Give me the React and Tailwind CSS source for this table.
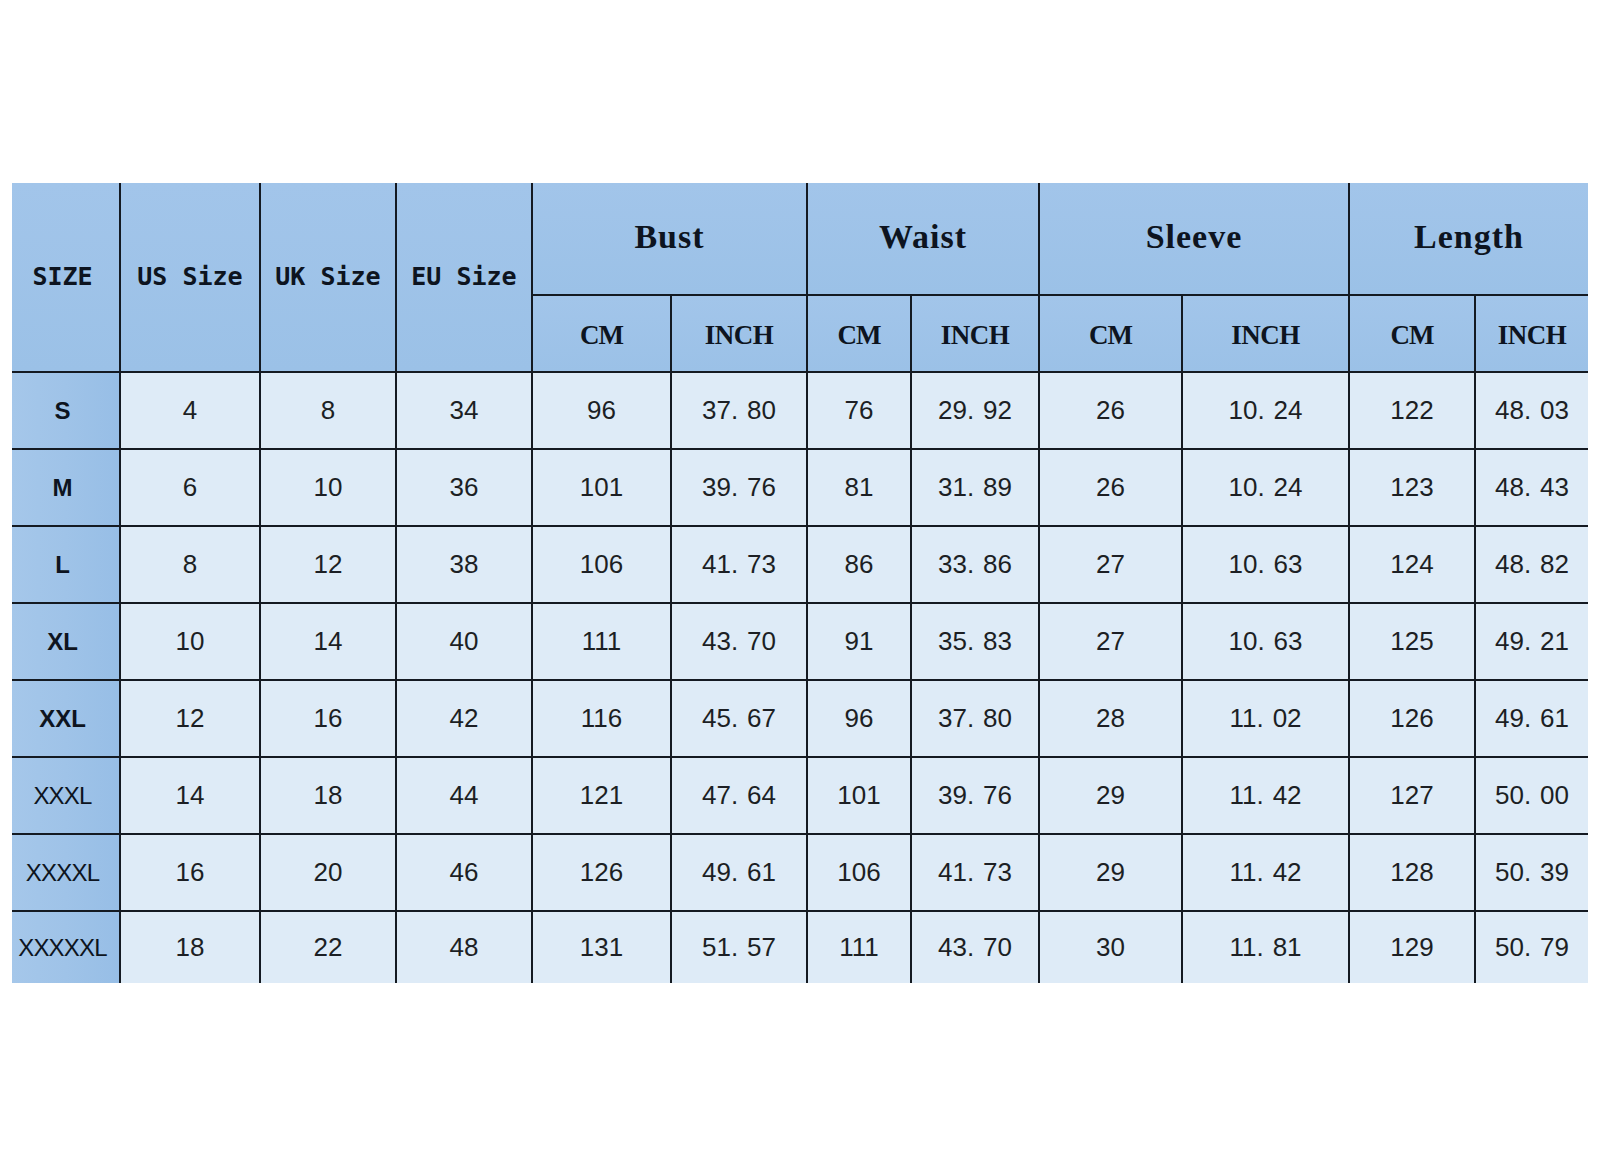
import React from 'react';

const groups = ['Bust', 'Waist', 'Sleeve', 'Length'];

const rows = [
  { size: 'S', bold: true, v: ['4', '8', '34', '96', '37.80', '76', '29.92', '26', '10.24', '122', '48.03'] },
  { size: 'M', bold: true, v: ['6', '10', '36', '101', '39.76', '81', '31.89', '26', '10.24', '123', '48.43'] },
  { size: 'L', bold: true, v: ['8', '12', '38', '106', '41.73', '86', '33.86', '27', '10.63', '124', '48.82'] },
  { size: 'XL', bold: true, v: ['10', '14', '40', '111', '43.70', '91', '35.83', '27', '10.63', '125', '49.21'] },
  { size: 'XXL', bold: true, v: ['12', '16', '42', '116', '45.67', '96', '37.80', '28', '11.02', '126', '49.61'] },
  { size: 'XXXL', bold: false, v: ['14', '18', '44', '121', '47.64', '101', '39.76', '29', '11.42', '127', '50.00'] },
  { size: 'XXXXL', bold: false, v: ['16', '20', '46', '126', '49.61', '106', '41.73', '29', '11.42', '128', '50.39'] },
  { size: 'XXXXXL', bold: false, v: ['18', '22', '48', '131', '51.57', '111', '43.70', '30', '11.81', '129', '50.79'] },
];

// "37.80" is drawn with a wide gap after the point, as in the chart
const Num = ({ value }) => {
  const i = value.indexOf('.');
  if (i < 0) return <span>{value}</span>;
  return (
    <span>
      {value.slice(0, i)}
      <span className="mr-[9px]">.</span>
      {value.slice(i + 1)}
    </span>
  );
};

const headCell = 'flex items-center justify-center bg-gradient-to-b from-[#a2c5ea] to-[#9bc1e7] text-[#0d1420]';
const sizeCell = 'flex items-center justify-center pr-[6px] bg-gradient-to-r from-[#a5c7ea] via-[#9fc3e8] to-[#97bee6] text-[#0d1420]';
const dataCell = 'flex items-center justify-center bg-[#deebf7] text-[#1c1f24] text-[26px] font-["Liberation_Sans",Arial,sans-serif]';

const monoSans = 'font-["DejaVu_Sans_Mono",monospace] font-bold text-[25px]';
const serif = 'font-["Liberation_Serif","Times_New_Roman",serif] font-bold';

export default function App() {
  return (
    <div className="w-[1600px] h-[1163px] bg-white pt-[183px] pl-[12px]">
      <div className="grid w-[1576px] gap-[2px] bg-[#141a22] grid-cols-[107px_138px_134px_134px_137px_134px_102px_126px_141px_165px_124px_112px] grid-rows-[111px_75px_75px_75px_75px_75px_75px_75px_75px_71px]">
        <div className={`${headCell} ${monoSans} row-span-2 pr-[6px]`}>SIZE</div>
        <div className={`${headCell} ${monoSans} row-span-2`}>US Size</div>
        <div className={`${headCell} ${monoSans} row-span-2`}>UK Size</div>
        <div className={`${headCell} ${monoSans} row-span-2`}>EU Size</div>
        {groups.map((g) => (
          <div key={g} className={`${headCell} ${serif} col-span-2 text-[34px] tracking-[1px] pb-[4px]`}>
            {g}
          </div>
        ))}
        {groups.map((g) => (
          <React.Fragment key={g + '-u'}>
            <div className={`${headCell} ${serif} text-[27px] tracking-[-1px] pt-[4px]`}>CM</div>
            <div className={`${headCell} ${serif} text-[27px] tracking-[-0.5px] pt-[4px]`}>INCH</div>
          </React.Fragment>
        ))}
        {rows.map((r) => (
          <React.Fragment key={r.size}>
            <div
              className={`${sizeCell} font-["Liberation_Sans",Arial,sans-serif] text-[24px] ${
                r.bold ? 'font-bold' : 'tracking-[-0.8px]'
              }`}
            >
              {r.size}
            </div>
            {r.v.map((x, i) => (
              <div key={i} className={dataCell}>
                <Num value={x} />
              </div>
            ))}
          </React.Fragment>
        ))}
      </div>
    </div>
  );
}
